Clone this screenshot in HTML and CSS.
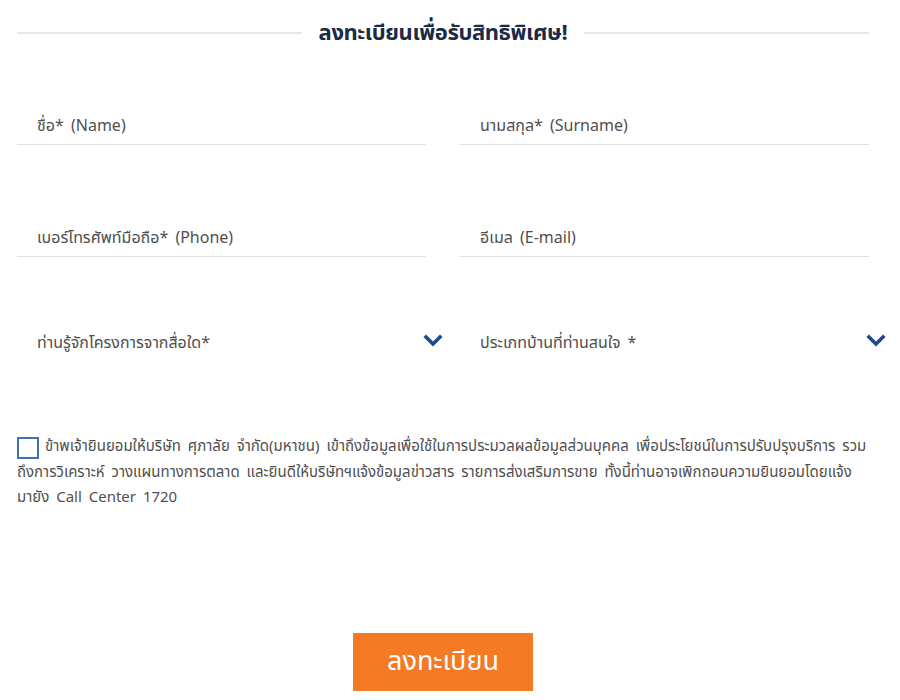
FILE: index.html
```html
<!DOCTYPE html>
<html lang="th">
<head>
<meta charset="utf-8">
<link rel="stylesheet" href="styles.css">
</head>
<body>
<div class="form">
  <div class="title-row">
    <span class="line"></span>
    <h2 class="title">ลงทะเบียนเพื่อรับสิทธิพิเศษ!</h2>
    <span class="line"></span>
  </div>
  <div class="grid">
    <div class="field"><span class="label">ชื่อ* (Name)</span></div>
    <div class="field"><span class="label">นามสกุล* (Surname)</span></div>
    <div class="field"><span class="label">เบอร์โทรศัพท์มือถือ* (Phone)</span></div>
    <div class="field"><span class="label">อีเมล (E-mail)</span></div>
    <div class="select"><span class="label">ท่านรู้จักโครงการจากสื่อใด*</span>
      <svg class="chev" width="20" height="14" viewBox="0 0 20 14"><path d="M3 3 L10 10 L17 3" fill="none" stroke="#1c4a8c" stroke-width="3.6" stroke-linecap="square"/></svg>
    </div>
    <div class="select"><span class="label">ประเภทบ้านที่ท่านสนใจ *</span>
      <svg class="chev" width="20" height="14" viewBox="0 0 20 14"><path d="M3 3 L10 10 L17 3" fill="none" stroke="#1c4a8c" stroke-width="3.6" stroke-linecap="square"/></svg>
    </div>
  </div>
  <div class="consent">
    <span class="box"></span>
    <p class="consent-text">ข้าพเจ้ายินยอมให้บริษัท ศุภาลัย จำกัด(มหาชน) เข้าถึงข้อมูลเพื่อใช้ในการประมวลผลข้อมูลส่วนบุคคล เพื่อประโยชน์ในการปรับปรุงบริการ รวม ถึงการวิเคราะห์ วางแผนทางการตลาด และยินดีให้บริษัทฯแจ้งข้อมูลข่าวสาร รายการส่งเสริมการขาย ทั้งนี้ท่านอาจเพิกถอนความยินยอมโดยแจ้ง มายัง Call Center 1720</p>
  </div>
  <div class="actions">
    <button class="submit">ลงทะเบียน</button>
  </div>
</div>
</body>
</html>
```
FILE: styles.css
```css
* { box-sizing: border-box; }
body {
  margin: 0;
  background: #fff;
  font-family: "Noto Sans Thai", "Noto Sans", "DejaVu Sans", sans-serif;
  color: #4a4a4a;
}
.form {
  width: 852px;
  margin-left: 17px;
}
.title-row {
  display: flex;
  align-items: center;
  gap: 17px;
  height: 66px;
}
.line {
  flex: 1;
  height: 2px;
  background: #e4e7eb;
}
.title {
  margin: 0;
  font-size: 22px;
  font-weight: 700;
  color: #1b2a45;
  letter-spacing: -0.4px;
}
.grid {
  display: grid;
  grid-template-columns: 409px 409px;
  column-gap: 34px;
  margin-top: 29px;
}
.field {
  height: 50px;
  border-bottom: 1px solid #dfe1e4;
  padding: 19px 0 0 20px;
  margin-bottom: 62px;
}
.label {
  font-size: 16px;
  line-height: 24px;
  word-spacing: 3px;
  color: #4f4f4f;
}
.select {
  position: relative;
  height: 40px;
  padding: 12px 0 0 20px;
}
.chev {
  position: absolute;
  right: -17px;
  top: 15px;
}
.consent {
  display: flex;
  align-items: flex-start;
  gap: 6px;
  margin-top: 78px;
}
.box {
  flex: none;
  width: 22px;
  height: 22px;
  border: 2px solid #3f6fb5;
}
.consent-text {
  margin: -3px 0 0 -28px;
  text-indent: 28px;
  font-size: 15px;
  line-height: 25.5px;
  word-spacing: 3px;
  color: #4f4f4f;
}
.actions {
  display: flex;
  justify-content: center;
  margin-top: 122px;
}
.submit {
  width: 180px;
  height: 58px;
  border: none;
  background: #f47a26;
  color: #fff;
  font-family: inherit;
  font-size: 27px;
}
```
